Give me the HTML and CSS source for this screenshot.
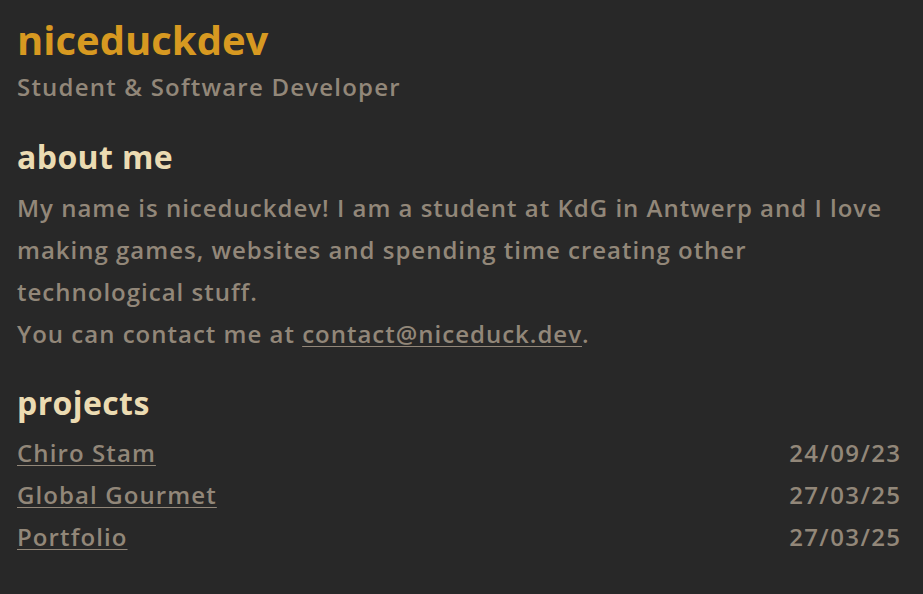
FILE: index.html
```html
<!DOCTYPE html>
<html lang="en">
<head>
<meta charset="utf-8">
<title>niceduckdev</title>
<link rel="stylesheet" href="styles.css">
</head>
<body>
<main class="page">
  <header class="header">
    <h1 class="title">niceduckdev</h1>
    <p class="subtitle">Student &amp; Software Developer</p>
  </header>
  <section class="section">
    <h2 class="heading">about me</h2>
    <p class="text">My name is niceduckdev! I am a student at KdG in Antwerp and I love making games, websites and spending time creating other technological stuff.<br>You can contact me at <a href="#" class="link">contact@niceduck.dev</a>.</p>
  </section>
  <section class="section projects">
    <h2 class="heading">projects</h2>
    <ul class="list">
      <li class="row"><a href="#" class="link">Chiro Stam</a><span class="date">24/09/23</span></li>
      <li class="row"><a href="#" class="link">Global Gourmet</a><span class="date">27/03/25</span></li>
      <li class="row"><a href="#" class="link">Portfolio</a><span class="date">27/03/25</span></li>
    </ul>
  </section>
</main>
</body>
</html>
```
FILE: styles.css
```css
html, body {
  margin: 0;
  padding: 0;
  background: #282828;
}
body {
  font-family: "Open Sans", "Noto Sans", sans-serif;
  font-weight: 600;
  color: #928779;
}
.page {
  padding: 16px 23px 16px 17px;
}
.title {
  margin: 0;
  font-size: 40px;
  line-height: 48px;
  font-weight: 700;
  color: #d79921;
}
.subtitle {
  margin: 0;
  font-size: 24px;
  line-height: 46px;
  letter-spacing: 1.2px;
}
.heading {
  margin: 25px 0 0;
  font-size: 32px;
  line-height: 44px;
  font-weight: 700;
  letter-spacing: 0.4px;
  color: #ebdbb2;
}
.projects .heading {
  margin-top: 26px;
}
.text {
  margin: 8px 0 0;
  font-size: 24px;
  line-height: 42px;
  letter-spacing: 1px;
}
.link {
  color: inherit;
  text-decoration: underline;
  text-decoration-thickness: 1px;
  text-underline-offset: 3px;
}
.list {
  list-style: none;
  margin: 7px 0 0;
  padding: 0;
}
.row {
  display: flex;
  justify-content: space-between;
  font-size: 24px;
  line-height: 42px;
  letter-spacing: 1.1px;
}
.date {
  letter-spacing: 1.4px;
  margin-right: -1.4px;
}
```
